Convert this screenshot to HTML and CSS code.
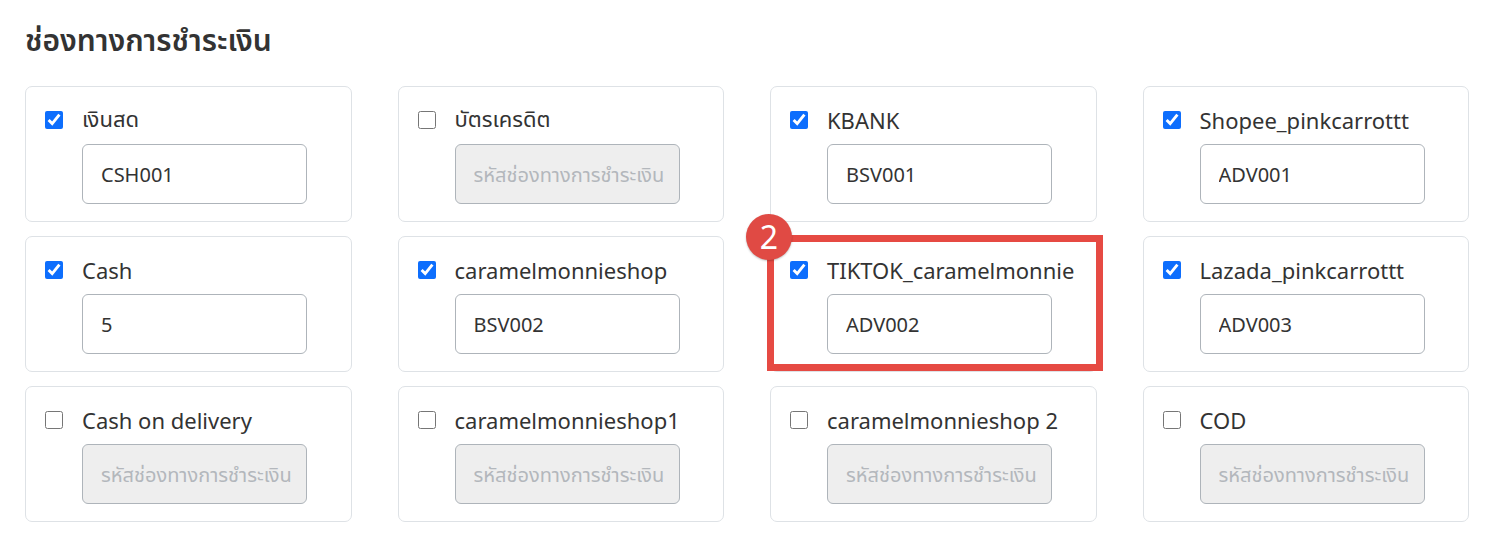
FILE: index.html
```html
<!DOCTYPE html>
<html lang="th">
<head>
  <meta charset="UTF-8" />
  <title>ช่องทางการชำระเงิน</title>
  <link rel="stylesheet" href="styles.css">
</head>
<body>
  <main class="page">
    <h2 class="title">ช่องทางการชำระเงิน</h2>

    <div class="channel-grid">
      <div class="card">
        <label class="check-row"><input type="checkbox" checked> <span>เงินสด</span></label>
        <input class="code-input" type="text" value="CSH001" placeholder="รหัสช่องทางการชำระเงิน">
      </div>
      <div class="card">
        <label class="check-row"><input type="checkbox"> <span>บัตรเครดิต</span></label>
        <input class="code-input" type="text" placeholder="รหัสช่องทางการชำระเงิน" disabled>
      </div>
      <div class="card">
        <label class="check-row"><input type="checkbox" checked> <span>KBANK</span></label>
        <input class="code-input" type="text" value="BSV001" placeholder="รหัสช่องทางการชำระเงิน">
      </div>
      <div class="card">
        <label class="check-row"><input type="checkbox" checked> <span>Shopee_pinkcarrottt</span></label>
        <input class="code-input" type="text" value="ADV001" placeholder="รหัสช่องทางการชำระเงิน">
      </div>

      <div class="card">
        <label class="check-row"><input type="checkbox" checked> <span>Cash</span></label>
        <input class="code-input" type="text" value="5" placeholder="รหัสช่องทางการชำระเงิน">
      </div>
      <div class="card">
        <label class="check-row"><input type="checkbox" checked> <span>caramelmonnieshop</span></label>
        <input class="code-input" type="text" value="BSV002" placeholder="รหัสช่องทางการชำระเงิน">
      </div>
      <div class="card marked">
        <label class="check-row"><input type="checkbox" checked> <span>TIKTOK_caramelmonnie</span></label>
        <input class="code-input" type="text" value="ADV002" placeholder="รหัสช่องทางการชำระเงิน">
        <div class="highlight"></div>
        <div class="step-badge">2</div>
      </div>
      <div class="card">
        <label class="check-row"><input type="checkbox" checked> <span>Lazada_pinkcarrottt</span></label>
        <input class="code-input" type="text" value="ADV003" placeholder="รหัสช่องทางการชำระเงิน">
      </div>

      <div class="card">
        <label class="check-row"><input type="checkbox"> <span>Cash on delivery</span></label>
        <input class="code-input" type="text" placeholder="รหัสช่องทางการชำระเงิน" disabled>
      </div>
      <div class="card">
        <label class="check-row"><input type="checkbox"> <span>caramelmonnieshop1</span></label>
        <input class="code-input" type="text" placeholder="รหัสช่องทางการชำระเงิน" disabled>
      </div>
      <div class="card">
        <label class="check-row"><input type="checkbox"> <span>caramelmonnieshop 2</span></label>
        <input class="code-input" type="text" placeholder="รหัสช่องทางการชำระเงิน" disabled>
      </div>
      <div class="card">
        <label class="check-row"><input type="checkbox"> <span>COD</span></label>
        <input class="code-input" type="text" placeholder="รหัสช่องทางการชำระเงิน" disabled>
      </div>
    </div>
  </main>
</body>
</html>
```

FILE: styles.css
```css
html, body {
  margin: 0;
  background: #fff;
  color: #333;
  font-family: "Noto Sans", "Noto Sans Thai", "Liberation Sans", sans-serif;
}

.page {
  padding: 0 22px 0 25px;
}

.title {
  margin: 22px 0 28px;
  font-size: 30px;
  line-height: 36px;
  font-weight: 600;
  color: #333;
}

/* 4 columns of payment channel cards */
.channel-grid {
  display: grid;
  grid-template-columns: repeat(4, 1fr);
  column-gap: 46px;
  row-gap: 14px;
}

.card {
  position: relative;
  border: 1px solid #dee2e6;
  border-radius: 7px;
  padding: 18px 19px 17px;
  background: #fff;
}

.check-row {
  display: flex;
  align-items: center;
  gap: 19px;
  height: 30px;
  font-size: 22px;
  color: #333;
}

.check-row input {
  width: 18px;
  height: 18px;
  margin: 0;
  accent-color: #0d6efd;
}

.code-input {
  display: block;
  box-sizing: border-box;
  width: 225px;
  height: 60px;
  margin: 9px 0 0 37px;
  padding: 0 2px 0 18px;
  border: 1px solid #aeb4ba;
  border-radius: 6px;
  font-family: inherit;
  font-size: 20px;
  color: #333;
  background: #fff;
}

.code-input:disabled {
  background: #eeeeee;
}

.code-input::placeholder {
  color: #b3b7bc;
}

/* annotation over the TIKTOK card */
.highlight {
  position: absolute;
  left: -4px;
  top: -2px;
  width: 336px;
  height: 136px;
  box-sizing: border-box;
  border: 7px solid #e64a43;
}

.step-badge {
  position: absolute;
  left: -25px;
  top: -23px;
  width: 46px;
  height: 46px;
  border-radius: 50%;
  background: #e04a44;
  color: #fff;
  font-size: 32px;
  line-height: 46px;
  text-align: center;
  box-shadow: 0 1px 2px rgba(0, 0, 0, 0.25);
}
```
